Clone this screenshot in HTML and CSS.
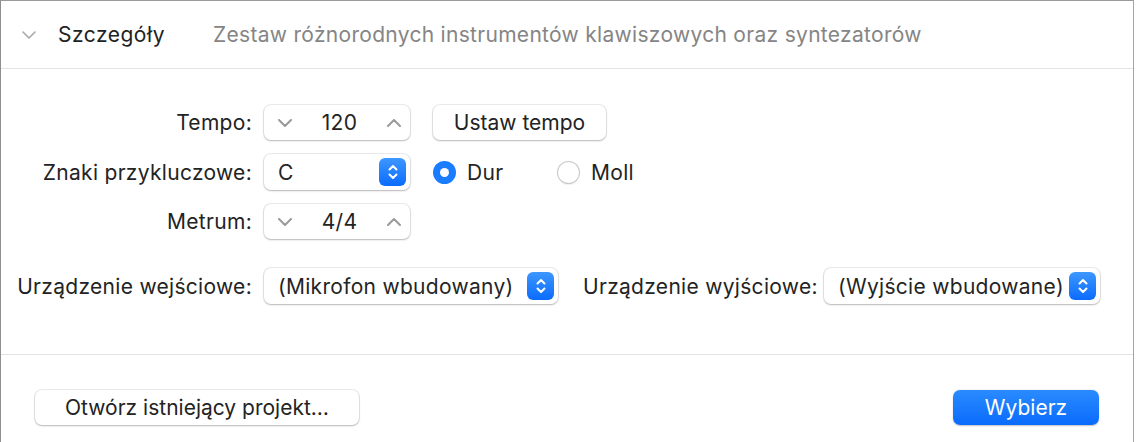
FILE: index.html
```html
<!DOCTYPE html>
<html lang="pl">
<head>
<meta charset="utf-8">
<title>Szczegóły</title>
<link rel="stylesheet" href="styles.css">
</head>
<body>
<div class="panel">
  <div class="header">
    <svg class="disclosure" width="14" height="8" viewBox="0 0 14 8"><path d="M1 1 L7 7 L13 1" fill="none" stroke="#a9a9a9" stroke-width="1.6" stroke-linecap="round" stroke-linejoin="round"/></svg>
    <span class="title">Szczegóły</span>
    <span class="desc">Zestaw różnorodnych instrumentów klawiszowych oraz syntezatorów</span>
  </div>

  <div class="form">
    <div class="grid">
      <label class="lbl">Tempo:</label>
      <div class="ctl-row">
        <div class="stepper">
          <svg class="chev" width="14" height="8" viewBox="0 0 14 8"><path d="M1 1 L7 7 L13 1" fill="none" stroke="#9a9a9a" stroke-width="2" stroke-linecap="round" stroke-linejoin="round"/></svg>
          <span class="val">120</span>
          <svg class="chev" width="14" height="8" viewBox="0 0 14 8"><path d="M1 7 L7 1 L13 7" fill="none" stroke="#9a9a9a" stroke-width="2" stroke-linecap="round" stroke-linejoin="round"/></svg>
        </div>
        <button class="btn btn-tempo">Ustaw tempo</button>
      </div>

      <label class="lbl">Znaki przykluczowe:</label>
      <div class="ctl-row">
        <div class="popup popup-key">
          <span class="popup-text">C</span>
          <span class="arrows"><svg width="12" height="16" viewBox="0 0 12 16"><path d="M2.5 5.5 L6 2 L9.5 5.5 M2.5 10.5 L6 14 L9.5 10.5" fill="none" stroke="#fff" stroke-width="2" stroke-linecap="round" stroke-linejoin="round"/></svg></span>
        </div>
        <div class="radio-group">
          <span class="radio on"></span><span class="radio-lbl dur">Dur</span>
          <span class="radio off"></span><span class="radio-lbl">Moll</span>
        </div>
      </div>

      <label class="lbl">Metrum:</label>
      <div class="ctl-row">
        <div class="stepper">
          <svg class="chev" width="14" height="8" viewBox="0 0 14 8"><path d="M1 1 L7 7 L13 1" fill="none" stroke="#9a9a9a" stroke-width="2" stroke-linecap="round" stroke-linejoin="round"/></svg>
          <span class="val">4/4</span>
          <svg class="chev" width="14" height="8" viewBox="0 0 14 8"><path d="M1 7 L7 1 L13 7" fill="none" stroke="#9a9a9a" stroke-width="2" stroke-linecap="round" stroke-linejoin="round"/></svg>
        </div>
      </div>
    </div>

    <div class="devices">
      <label class="lbl lbl-in">Urządzenie wejściowe:</label>
      <div class="popup popup-in">
        <span class="popup-text">(Mikrofon wbudowany)</span>
        <span class="arrows"><svg width="12" height="16" viewBox="0 0 12 16"><path d="M2.5 5.5 L6 2 L9.5 5.5 M2.5 10.5 L6 14 L9.5 10.5" fill="none" stroke="#fff" stroke-width="2" stroke-linecap="round" stroke-linejoin="round"/></svg></span>
      </div>
      <label class="lbl lbl-out">Urządzenie wyjściowe:</label>
      <div class="popup popup-out">
        <span class="popup-text">(Wyjście wbudowane)</span>
        <span class="arrows"><svg width="12" height="16" viewBox="0 0 12 16"><path d="M2.5 5.5 L6 2 L9.5 5.5 M2.5 10.5 L6 14 L9.5 10.5" fill="none" stroke="#fff" stroke-width="2" stroke-linecap="round" stroke-linejoin="round"/></svg></span>
      </div>
    </div>
  </div>

  <div class="footer">
    <button class="btn btn-open">Otwórz istniejący projekt…</button>
    <button class="btn btn-primary">Wybierz</button>
  </div>
</div>
</body>
</html>
```

FILE: styles.css
```css
* { box-sizing: border-box; }
html, body { margin: 0; padding: 0; background: #fff; }
body {
  font-family: Inter, "Noto Sans", "Liberation Sans", sans-serif;
  font-size: 21px;
  letter-spacing: 0.3px;
  color: #242424;
  width: 1136px;
  height: 442px;
  overflow: hidden;
}
.panel {
  width: 1134px;
  height: 442px;
  border-left: 1px solid #8e8e8e;
  border-top: 1px solid #9a9a9a;
  border-right: 1px solid #a5a5a5;
  display: flex;
  flex-direction: column;
}
.header {
  height: 68px;
  flex: none;
  display: flex;
  align-items: center;
  padding-left: 21px;
  border-bottom: 1px solid #e3e3e3;
}
.disclosure { margin-right: 22px; }
.title { color: #222; letter-spacing: 0.5px; }
.desc { margin-left: 48px; color: #858585; }

.form {
  flex: none;
  height: 286px;
  border-bottom: 1px solid #e3e3e3;
  padding-top: 36px;
}
.grid {
  display: grid;
  grid-template-columns: 251px auto;
  column-gap: 12px;
  row-gap: 14px;
  align-items: center;
}
.lbl { text-align: right; white-space: nowrap; color: #232323; }
.ctl-row { display: flex; align-items: center; }

.stepper, .popup, .btn {
  background: #fff;
  border-radius: 7px;
  box-shadow: 0 0 0 1px rgba(0,0,0,0.08), 0 1px 2px rgba(0,0,0,0.22);
}
.stepper {
  width: 146px;
  height: 35px;
  display: flex;
  align-items: center;
  justify-content: space-between;
  padding: 0 9px 0 14px;
}
.val { color: #232323; }

.btn {
  border: none;
  font: inherit;
  color: #232323;
  height: 35px;
  padding: 0;
}
.btn-tempo { width: 173px; margin-left: 23px; }

.popup {
  height: 36px;
  display: flex;
  align-items: center;
  justify-content: space-between;
  padding: 0 4px 0 14px;
  flex: none;
}
.popup-key { width: 146px; }
.arrows {
  width: 27px;
  height: 28px;
  border-radius: 6px;
  background: linear-gradient(#3d97ff, #0b6cfd);
  display: flex;
  align-items: center;
  justify-content: center;
  flex: none;
}

.radio-group { display: flex; align-items: center; margin-left: 23px; }
.radio {
  width: 23px;
  height: 23px;
  border-radius: 50%;
  flex: none;
}
.radio.on {
  background: #1a7cff;
  display: flex;
  align-items: center;
  justify-content: center;
}
.radio.on::after {
  content: "";
  width: 9px;
  height: 9px;
  border-radius: 50%;
  background: #fff;
}
.radio.off {
  background: #fff;
  box-shadow: inset 0 0 0 1px #c9c9c9, 0 1px 1px rgba(0,0,0,0.06);
}
.radio-lbl { margin-left: 11px; }
.radio-lbl.dur { width: 90px; }

.devices {
  display: flex;
  align-items: center;
  margin-top: 29px;
}
.lbl-in { width: 251px; flex: none; }
.popup-in { width: 294px; margin-left: 12px; }
.lbl-out { width: 224px; flex: none; text-align: left; margin-left: 25px; }
.popup-out { width: 276px; margin-left: 17px; }

.footer {
  flex: 1;
  display: flex;
  justify-content: space-between;
  align-items: flex-start;
  padding: 35px 34px 0 34px;
}
.btn-open { width: 324px; }
.btn-primary {
  width: 146px;
  color: #fff;
  background: linear-gradient(#2a8bff, #0a6bfc);
  box-shadow: 0 0.5px 1.5px rgba(0,0,0,0.25);
}
```
